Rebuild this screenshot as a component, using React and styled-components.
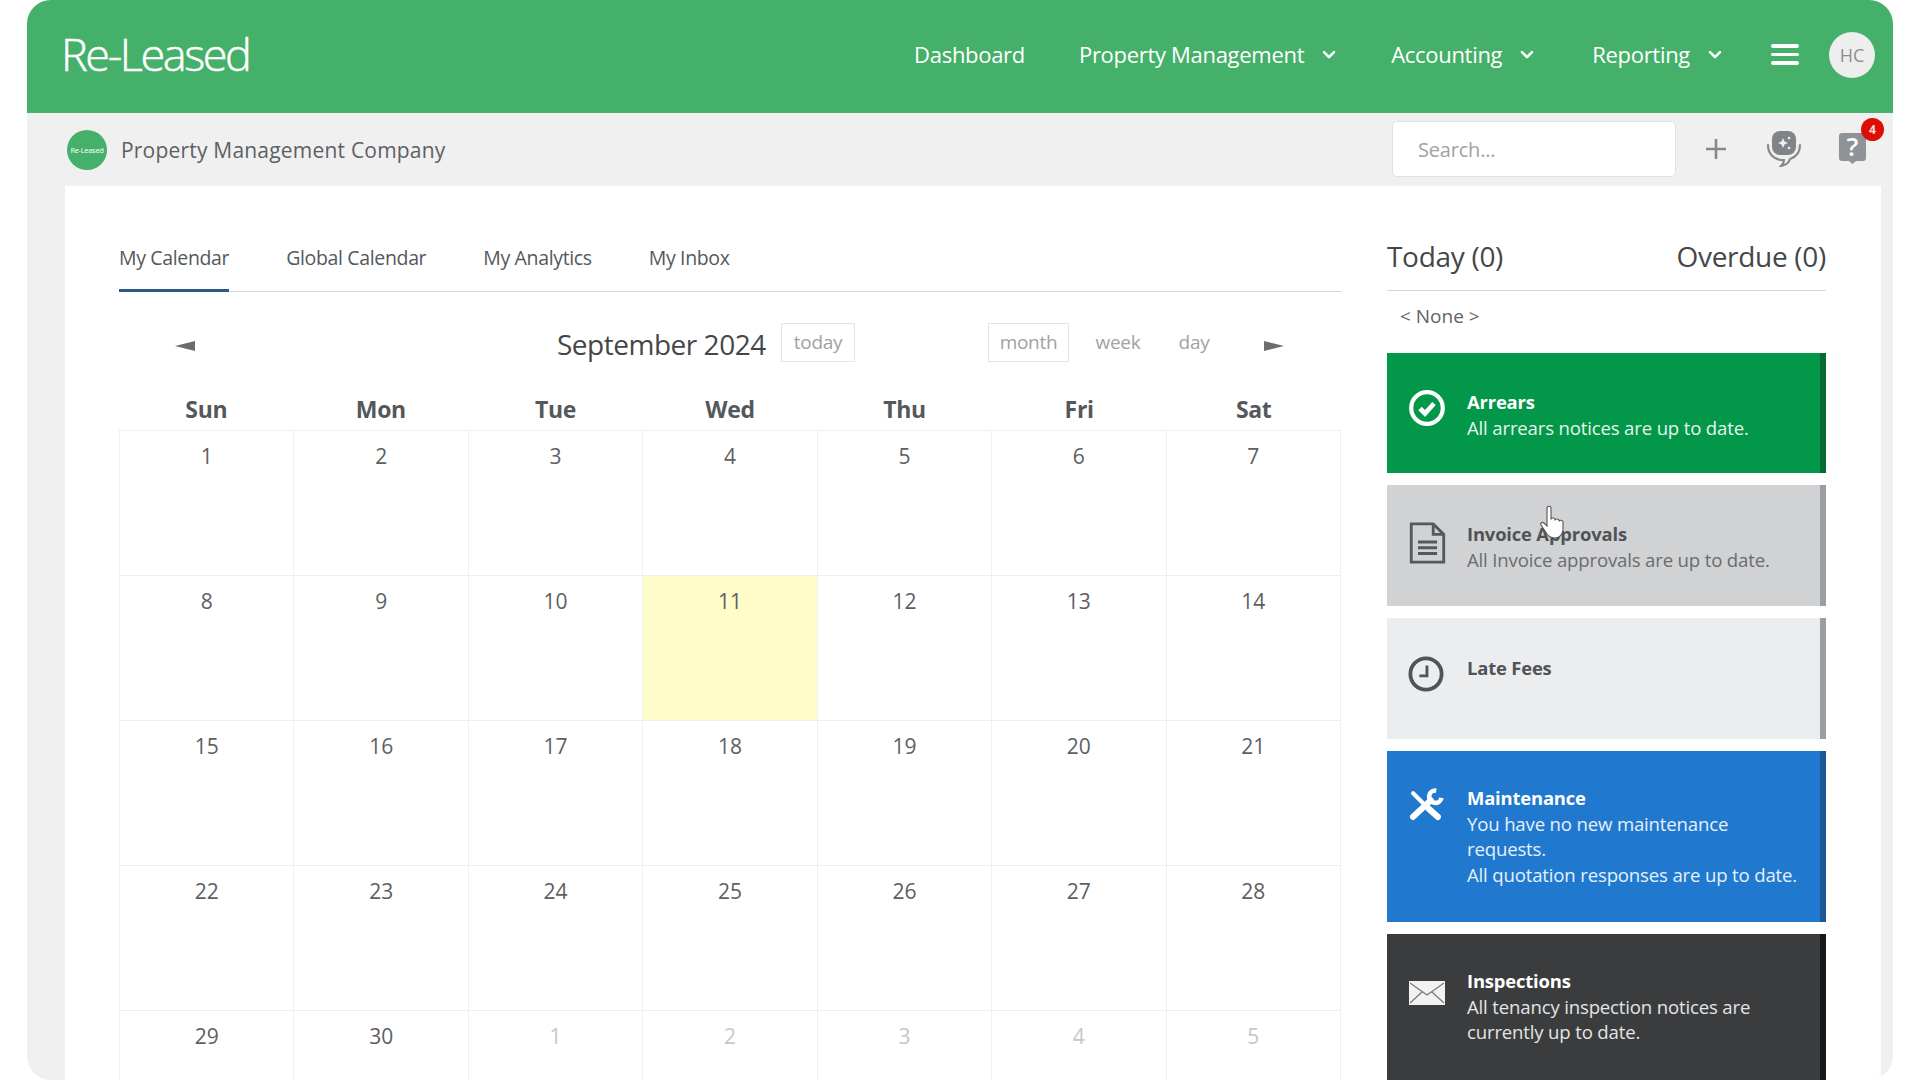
import React from 'react';
import styled, { createGlobalStyle } from 'styled-components';

const Global = createGlobalStyle`
  html, body { margin: 0; padding: 0; background: #fff; height: 1080px; overflow: hidden; }
  body { font-family: "Open Sans", "Noto Sans", "Liberation Sans", sans-serif; }
  * { box-sizing: border-box; }
`;

const Stage = styled.div`
  width: 1920px; height: 1080px; padding: 0 27px; overflow: hidden; background: #fff;
`;
const Frame = styled.div`
  width: 1866px; height: 1080px; background: #f0f0f0; border-radius: 24px; overflow: hidden;
  display: flex; flex-direction: column; position: relative;
`;
const Header = styled.header`
  height: 113px; background: #45b06a; display: flex; align-items: center; padding: 0 18px 5px 34px; flex: none; color: #fff;
`;
const Logo = styled.div`
  font-family: "Open Sans", sans-serif; font-weight: 300; font-size: 45px; letter-spacing: -2.4px; margin: -1px auto 0 0; color: #fff; -webkit-text-stroke: 0.5px #fff;
`;
const NavItem = styled.a`
  display: flex; align-items: center; font-size: 22px; letter-spacing: -0.3px; color: #fff; margin-right: ${p => p.$mr}px; white-space: nowrap;
  svg { margin-left: 18px; margin-top: 1px; }
`;
const Burger = styled.div`
  width: 28px; display: flex; flex-direction: column; gap: 5px; margin: 1px 30px 0 0;
  span { display: block; height: 3.5px; background: #fff; border-radius: 2px; }
`;
const Avatar = styled.div`
  width: 46px; height: 46px; border-radius: 50%; background: #eeeeee; color: #8c8e91; font-size: 18px; margin-top: 2px;
  display: flex; align-items: center; justify-content: center;
`;
const SubBar = styled.div`
  height: 73px; flex: none; display: flex; align-items: center; padding: 0 18px 0 40px; background: #f0f0f0;
`;
const Badge = styled.div`
  width: 40px; height: 40px; border-radius: 50%; background: #45b06a; color: #fff; font-size: 7.5px; letter-spacing: -0.3px;
  display: flex; align-items: center; justify-content: center; margin-right: 14px;
`;
const Company = styled.div`
  font-size: 21px; color: #5d6063; letter-spacing: 0.2px; margin-right: auto;
`;
const Search = styled.div`
  width: 284px; height: 56px; background: #fff; border: 1px solid #e1e1e1; border-radius: 5px; padding: 2px 25px 0 25px;
  display: flex; align-items: center; color: #a0a2a5; font-size: 20px; letter-spacing: -0.2px; margin: 0 17px 2px 0;
`;
const ToolIcon = styled.div`
  width: 46px; height: 46px; display: flex; align-items: center; justify-content: center; position: relative; margin: 0 0 2px ${p => p.$ml}px;
`;
const Count = styled.span`
  position: absolute; top: -8px; right: -9px; width: 23px; height: 23px; border-radius: 50%; background: #db0f05; color: #f8d8d0;
  font-size: 12px; font-weight: 700; display: flex; align-items: center; justify-content: center;
`;
const Content = styled.main`
  flex: 1; margin: 0 12px 0 38px; background: #fff; padding: 41px 55px 0 54px; display: flex; gap: 45px; overflow: hidden; align-items: flex-start;
`;
const Left = styled.section` width: 1223px; flex: none; `;
const Tabs = styled.nav`
  height: 65px; display: flex; gap: 57px; border-bottom: 1px solid #d5d7da;
`;
const Tab = styled.a`
  height: 65px; padding-top: 17px; font-size: 19.5px; letter-spacing: -0.35px; color: #55585b; white-space: nowrap;
  border-bottom: ${p => (p.$active ? '3px solid #2c5a80' : 'none')};
`;
const Toolbar = styled.div`
  height: 94px; display: flex; align-items: flex-start; padding: 0 0 0 56px; color: #55585b;
`;
const Arrow = styled.div`
  width: 0; height: 0; border-top: 5px solid transparent; border-bottom: 5px solid transparent;
  ${p => (p.$dir === 'left' ? 'border-right: 20px solid #6a6c6f;' : 'border-left: 20px solid #6a6c6f;')}
  margin-top: 49px; margin-left: ${p => p.$ml || 0}px;
`;
const Title = styled.div`
  width: 224px; margin: 33px 0 0 362px; font-size: 28px; letter-spacing: -0.48px; color: #44474a; white-space: nowrap; line-height: 38px;
`;
const ViewButton = styled.div`
  height: 39px; border: ${p => (p.$boxed ? '1px solid #e4e4e4' : '1px solid transparent')}; color: #a0a2a5; font-size: 19px; letter-spacing: -0.3px;
  display: flex; align-items: center; justify-content: center; width: ${p => p.$w}px; margin: 31px 0 0 ${p => p.$ml}px; padding-bottom: 2px;
`;
const Heads = styled.div`
  display: grid; grid-template-columns: repeat(7, 1fr); width: 1222px; height: 45px; border-bottom: 1px solid #f0f0f0;
`;
const Head = styled.div`
  font-size: 23px; font-weight: 700; letter-spacing: -0.35px; color: #55585b; text-align: center; padding-top: 8px; line-height: 30px;
`;
const Grid = styled.div`
  display: grid; grid-template-columns: repeat(7, 1fr); width: 1222px; grid-auto-rows: 145px; border-right: 1px solid #f0f0f0;
`;
const Cell = styled.div`
  border-left: 1px solid #efefef; border-bottom: 1px solid #efefef; text-align: center; padding-top: 11px; font-size: 21px;
  color: ${p => (p.$muted ? '#c5c7c9' : '#5d6063')}; background: ${p => (p.$today ? '#fefcc8' : '#fff')};
`;
const Right = styled.aside` width: 439px; flex: none; display: flex; flex-direction: column; `;
const PanelHead = styled.div`
  height: 64px; display: flex; justify-content: space-between; border-bottom: 1px solid #d5d7da; font-size: 28px; letter-spacing: -0.3px; color: #44474a; padding-top: 10px;
`;
const None = styled.div`
  height: 62px; padding: 12px 0 0 13px; font-size: 19px; color: #606366;
`;
const Card = styled.div`
  background: ${p => p.$bg}; border-right: 6px solid ${p => p.$edge}; color: ${p => p.$fg}; height: ${p => p.$h}px; margin-bottom: 12px; flex: none;
  display: flex; padding: ${p => p.$pt}px 10px 0 22px; position: relative;
`;
const CardIcon = styled.div` width: 58px; flex: none; margin-top: ${p => p.$mt}px; `;
const CardText = styled.div` font-size: 18.6px; line-height: 25.7px; letter-spacing: -0.17px; `;
const CardTitle = styled.div` font-weight: 700; font-size: 18.4px; line-height: 24.5px; color: ${p => p.$c || 'inherit'}; `;
const Cursor = styled.svg` position: absolute; left: 152px; top: 20px; `;

const Chevron = () => (
  <svg width="14" height="10" viewBox="0 0 14 10" fill="none" stroke="#fff" strokeWidth="2.6" strokeLinecap="round" strokeLinejoin="round"><path d="M2 2.2 7 7.2 12 2.2" /></svg>
);

const rows = [
  [1,2,3,4,5,6,7],[8,9,10,11,12,13,14],[15,16,17,18,19,20,21],[22,23,24,25,26,27,28],[29,30,'1m','2m','3m','4m','5m'],
];

export default function App() {
  return (
    <>
      <Global />
      <Stage>
        <Frame>
          <Header>
            <Logo>Re-Leased</Logo>
            <NavItem $mr={54}>Dashboard</NavItem>
            <NavItem $mr={55}>Property Management<Chevron /></NavItem>
            <NavItem $mr={58}>Accounting<Chevron /></NavItem>
            <NavItem $mr={49}>Reporting<Chevron /></NavItem>
            <Burger><span /><span /><span /></Burger>
            <Avatar>HC</Avatar>
          </Header>
          <SubBar>
            <Badge>Re-Leased</Badge>
            <Company>Property Management Company</Company>
            <Search>Search...</Search>
            <ToolIcon $ml={0}>
              <svg width="24" height="24" viewBox="0 0 24 24" fill="none" stroke="#85888c" strokeWidth="2.6"><path d="M12 2v20M2 12h20" /></svg>
            </ToolIcon>
            <ToolIcon $ml={22}>
              <svg width="36" height="36" viewBox="0 0 36 36" fill="none">
                <rect x="6" y="0" width="24" height="24" rx="8" fill="#80848a" />
                <path d="M17 7l1.500 3.500L22 12l-3.500 1.500L17 17l-1.500-3.500L12 12l3.500-1.500z" fill="#f0f0f0" />
                <circle cx="23" cy="7" r="1.300" fill="#f0f0f0" /><circle cx="23" cy="17" r="1.300" fill="#f0f0f0" />
                <path d="M2 14c0 8 5 14 13 15h3c0 2-1 4-3 6 5-1 8-3 9-7 6-2 10-7 10-14" stroke="#85888c" strokeWidth="2.200" strokeLinecap="round" />
              </svg>
            </ToolIcon>
            <ToolIcon $ml={22}>
              <svg width="27" height="31" viewBox="0 0 27 31">
                <path d="M3 0h21a3 3 0 0 1 3 3v22a3 3 0 0 1-3 3h-7l-3.500 3-3.500-3H3a3 3 0 0 1-3-3V3a3 3 0 0 1 3-3z" fill="#8f9296" />
                <text x="13.500" y="23" fontSize="26" fontWeight="600" fontFamily="Open Sans, sans-serif" fill="#fff" textAnchor="middle">?</text>
              </svg>
              <Count>4</Count>
            </ToolIcon>
          </SubBar>
          <Content>
            <Left>
              <Tabs>
                <Tab $active>My Calendar</Tab>
                <Tab>Global Calendar</Tab>
                <Tab>My Analytics</Tab>
                <Tab>My Inbox</Tab>
              </Tabs>
              <Toolbar>
                <Arrow $dir="left" />
                <Title>September 2024</Title>
                <ViewButton $boxed $w={74} $ml={0}>today</ViewButton>
                <ViewButton $boxed $w={81} $ml={133}>month</ViewButton>
                <ViewButton $w={66} $ml={16}>week</ViewButton>
                <ViewButton $w={60} $ml={13}>day</ViewButton>
                <Arrow $dir="right" $ml={40} />
              </Toolbar>
              <Heads>
                {['Sun','Mon','Tue','Wed','Thu','Fri','Sat'].map(d => <Head key={d}>{d}</Head>)}
              </Heads>
              <Grid>
                {rows.flat().map((d, i) => {
                  const muted = typeof d === 'string';
                  return <Cell key={i} $muted={muted} $today={d === 11}>{muted ? parseInt(d, 10) : d}</Cell>;
                })}
              </Grid>
            </Left>
            <Right>
              <PanelHead><span>Today (0)</span><span>Overdue (0)</span></PanelHead>
              <None>&lt; None &gt;</None>
              <Card $bg="#03974a" $edge="#056a33" $fg="#e6f5ec" $h={120} $pt={37}>
                <CardIcon $mt={0}>
                  <svg width="36" height="36" viewBox="0 0 36 36" fill="none"><circle cx="18" cy="18" r="15.800" stroke="#fff" strokeWidth="4.200" /><path d="M11 18.500l5 5 9-10" stroke="#fff" strokeWidth="4.800" /></svg>
                </CardIcon>
                <CardText><CardTitle $c="#fff">Arrears</CardTitle>All arrears notices are up to date.</CardText>
              </Card>
              <Card $bg="#d1d2d4" $edge="#9a9da1" $fg="#6a6c70" $h={121} $pt={37}>
                <CardIcon $mt={0}>
                  <svg width="37" height="42" viewBox="0 0 38 44" fill="none" stroke="#55585c" strokeWidth="3"><path d="M2 2h23l11 11v29H2z" /><path d="M25 2v11h11" /><path d="M9 21h20M9 27h20M9 33h20" /></svg>
                </CardIcon>
                <CardText><CardTitle $c="#505357">Invoice Approvals</CardTitle>All Invoice approvals are up to date.</CardText>
                <Cursor width="30" height="36" viewBox="0 0 30 36">
                  <path d="M8 3.500c0-3 4-3 4 0v11c0-2 4-2 4 0v1c0-2 4-2 4 0v1c0-2 4-1.500 4 .5v7c0 5-3 9-8 9-5.500 0-8-3-10-7l-4-6c-1-2 1-3.500 3-2l3 3z" fill="#fff" stroke="#555" strokeWidth="1.1" />
                </Cursor>
              </Card>
              <Card $bg="#ecedee" $edge="#9a9da1" $fg="#6a6c70" $h={121} $pt={38}>
                <CardIcon $mt={0}>
                  <svg width="36" height="36" viewBox="0 0 38 38" fill="none" stroke="#505357" style={{ marginLeft: -1 }}><circle cx="19" cy="19" r="16.500" strokeWidth="4" /><path d="M20 10v11h-8" strokeWidth="3" /></svg>
                </CardIcon>
                <CardText><CardTitle $c="#505357">Late Fees</CardTitle></CardText>
              </Card>
              <Card $bg="#2079cf" $edge="#1c5796" $fg="#e6f0fa" $h={171} $pt={35}>
                <CardIcon $mt={2}>
                  <svg width="35" height="33" viewBox="0 0 34 32" fill="none" stroke="#fff" strokeLinecap="round">
                    <path d="M4 5 14 15" strokeWidth="4" />
                    <path d="M19 20 28 28" strokeWidth="6" />
                    <path d="M4 28 21 12" strokeWidth="6" />
                    <path d="M26.500 2.500A6 6 0 1 0 31.500 9.500" strokeWidth="4.500" strokeLinecap="butt" />
                  </svg>
                </CardIcon>
                <CardText><CardTitle $c="#fff">Maintenance</CardTitle>You have no new maintenance<br />requests.<br />All quotation responses are up to date.</CardText>
              </Card>
              <Card $bg="#3b3c3e" $edge="#17181a" $fg="#e4e4e5" $h={171} $pt={35}>
                <CardIcon $mt={12}>
                  <svg width="36" height="24" viewBox="0 0 36 24"><rect width="36" height="24" fill="#f2f2f2" /><path d="M1 2l17 12L35 2M1 22l12-11M35 22 23 11" fill="none" stroke="#77787a" strokeWidth="1.200" /></svg>
                </CardIcon>
                <CardText><CardTitle $c="#fff">Inspections</CardTitle>All tenancy inspection notices are<br />currently up to date.</CardText>
              </Card>
            </Right>
          </Content>
        </Frame>
      </Stage>
    </>
  );
}
